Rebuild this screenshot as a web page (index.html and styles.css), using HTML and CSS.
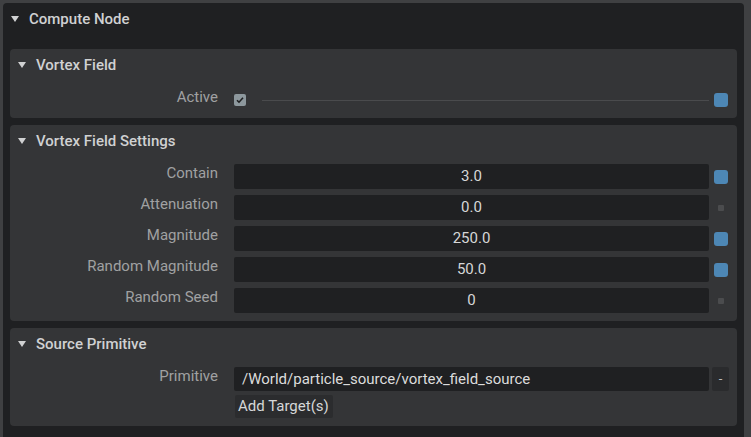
FILE: index.html
```html
<!DOCTYPE html>
<html>
<head>
<meta charset="utf-8">
<link rel="stylesheet" href="styles.css">
</head>
<body>
<div class="main">
  <div class="main-header"><span class="tri"></span><span class="main-title">Compute Node</span></div>
  <div class="main-body">
    <section class="panel">
      <div class="panel-header"><span class="tri"></span><span class="panel-title">Vortex Field</span></div>
      <div class="panel-body">
        <div class="row">
          <div class="label">Active</div>
          <div class="check-cell">
            <span class="checkbox"><svg width="12" height="12" viewBox="0 0 12 12"><path d="M3 6.2 L5 8.2 L9 3.8" fill="none" stroke="#1e1f21" stroke-width="1.6"/></svg></span>
            <span class="hline"></span>
          </div>
          <div class="ind"><span class="blue"></span></div>
        </div>
      </div>
    </section>

    <section class="panel">
      <div class="panel-header"><span class="tri"></span><span class="panel-title">Vortex Field Settings</span></div>
      <div class="panel-body rows">
        <div class="row"><div class="label">Contain</div><div class="field">3.0</div><div class="ind"><span class="blue"></span></div></div>
        <div class="row"><div class="label">Attenuation</div><div class="field">0.0</div><div class="ind"><span class="grey"></span></div></div>
        <div class="row"><div class="label">Magnitude</div><div class="field">250.0</div><div class="ind"><span class="blue"></span></div></div>
        <div class="row"><div class="label">Random Magnitude</div><div class="field">50.0</div><div class="ind"><span class="blue"></span></div></div>
        <div class="row"><div class="label">Random Seed</div><div class="field">0</div><div class="ind"><span class="grey"></span></div></div>
      </div>
    </section>

    <section class="panel panel-last">
      <div class="panel-header"><span class="tri"></span><span class="panel-title">Source Primitive</span></div>
      <div class="panel-body">
        <div class="row">
          <div class="label">Primitive</div>
          <div class="field path">/World/particle_source/vortex_field_source</div>
          <div class="minus">-</div>
        </div>
        <div class="row2">
          <div class="btn">Add Target(s)</div>
        </div>
      </div>
    </section>
  </div>
</div>
</body>
</html>
```

FILE: styles.css
```css
* { box-sizing: border-box; }
html, body { margin: 0; padding: 0; }
body {
  background: #3f4042;
  width: 751px;
  height: 437px;
  overflow: hidden;
  font-family: Roboto, "Liberation Sans", sans-serif;
  font-size: 15px;
  color: #d2d3d4;
}
.main {
  margin: 3px 7px 0 3px;
  background: #1f2022;
  border-radius: 4px 4px 0 0;
  height: 434px;
}
.main-header {
  height: 32px;
  display: flex;
  align-items: center;
  padding-left: 8px;
}
.tri {
  width: 0; height: 0;
  border-left: 4px solid transparent;
  border-right: 4px solid transparent;
  border-top: 6px solid #d0d1d2;
  margin-right: 10px;
}
.main-title, .panel-title {
  font-size: 15px;
  font-weight: 500;
  color: #d0d1d2;
}
.main-body {
  padding: 14px 7px 0 7px;
  display: flex;
  flex-direction: column;
  gap: 7px;
}
.panel {
  background: #343537;
  border-radius: 4px;
  padding-bottom: 6px;
}
.panel-last { padding-bottom: 8px; }
.panel-header {
  height: 32px;
  display: flex;
  align-items: center;
  padding-left: 8px;
}
.panel-body {
  padding-top: 7px;
  display: flex;
  flex-direction: column;
}
.rows { gap: 6px; padding-bottom: 2px; }
.row {
  display: grid;
  grid-template-columns: 208px 491px 19px;
  height: 24px;
}
.rows .row { height: 25px; }
.label {
  text-align: right;
  line-height: 18px;
  color: #a0a1a2;
  font-size: 15px;
  width: 208px;
  white-space: nowrap;
}
.row > .label + * { margin-left: 16px; }
.field {
  background: #1f2022;
  border-radius: 2px;
  text-align: center;
  line-height: 25px;
  color: #d6d7d8;
  font-size: 15px;
}
.field.path {
  text-align: left;
  padding-left: 8px;
  line-height: 24px;
  color: #dcdcdc;
  white-space: nowrap;
}
.ind {
  display: flex;
  align-items: center;
  justify-content: flex-end;
}
.ind .grey {
  margin-right: 4px;
}
.blue {
  width: 14px; height: 14px;
  background: #4d87b5;
  border-radius: 3px;
}
.grey {
  width: 6px; height: 6px;
  background: #4b4c4e;
  border-radius: 1px;
}
.check-cell {
  display: flex;
  align-items: center;
}
.checkbox {
  width: 12px; height: 12px;
  background: #8d989d;
  border-radius: 2px;
  display: flex;
}
.hline {
  flex: 1;
  height: 1px;
  background: #4a4b4d;
  margin-left: 16px;
}
.minus {
  background: #2a2b2d;
  border-radius: 2px;
  width: 17px;
  margin-left: 3px;
  line-height: 24px;
  text-align: center;
  color: #bcbcbc;
  font-size: 13px;
}
.row2 {
  padding-left: 225px;
  margin-top: 4px;
  height: 23px;
}
.btn {
  display: inline-block;
  background: #2b2c2e;
  border-radius: 2px;
  height: 23px;
  line-height: 23px;
  padding: 0 3px;
  width: 98px;
  font-size: 15px;
  color: #d6d7d8;
  white-space: nowrap;
}
```
